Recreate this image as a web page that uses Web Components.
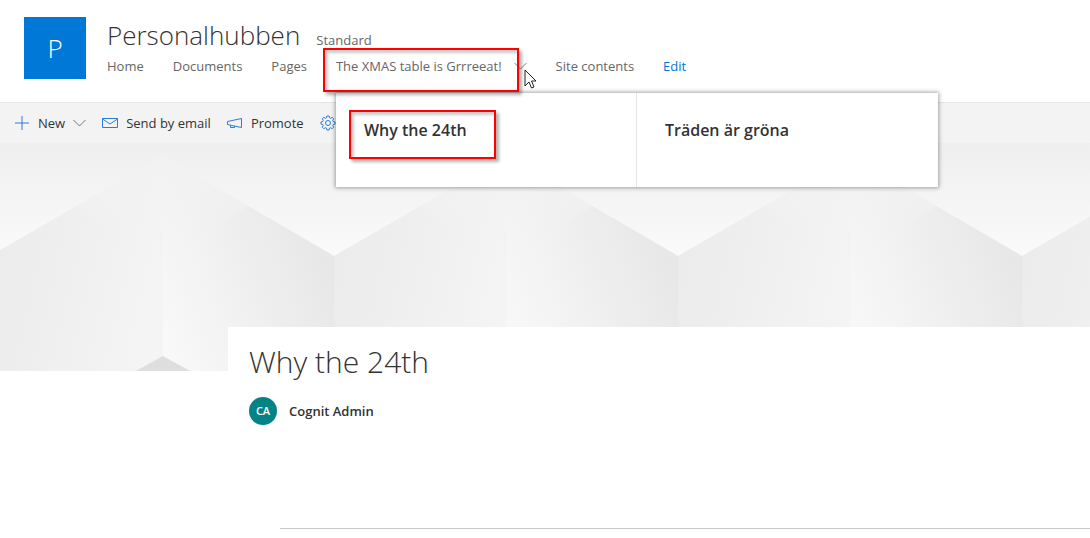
<!DOCTYPE html>
<html lang="sv">
<head>
<meta charset="utf-8">
<meta name="viewport" content="width=device-width, initial-scale=1">
<title>Personalhubben</title>
<style>
    body {
        margin: 0;
        background: #fff;
        color: #333;
        font-family: 'Open Sans', 'Noto Sans', sans-serif;
        font-size: 13px;
        line-height: 20px;
    }
</style>
</head>
<body>
<site-header name="Personalhubben" tier="Standard" initial="P">
    <nav-item href="#home">Home</nav-item>
    <nav-item href="#documents">Documents</nav-item>
    <nav-item href="#pages">Pages</nav-item>
    <nav-item href="#xmas" open>The XMAS table is Grrreeat!
        <mega-menu slot="menu">
            <menu-column href="#why" marked>Why the 24th</menu-column>
            <menu-column href="#trees">Träden är gröna</menu-column>
        </mega-menu>
    </nav-item>
    <nav-item href="#contents">Site contents</nav-item>
    <nav-item href="#edit" accent>Edit</nav-item>
</site-header>
<command-bar>
    <command-button icon="plus" chevron>New</command-button>
    <command-button icon="mail">Send by email</command-button>
    <command-button icon="promote">Promote</command-button>
    <command-button icon="gear"></command-button>
</command-bar>
<main>
    <hero-banner></hero-banner>
    <page-title author="Cognit Admin" initials="CA">Why the 24th</page-title>
</main>

<script>
const icons = {
    plus: '<svg width="16" height="16" viewBox="0 0 16 16"><path d="M8 1v14M1 8h14"/></svg>',
    mail: '<svg width="16" height="16" viewBox="0 0 16 16"><path d="M.5 3.500h15v9H.5zM.5 4l7.500 5 7.500-5"/></svg>',
    promote: '<svg width="16" height="16" viewBox="0 0 16 16"><path d="M.5 6.500v3l14 3v-9zM3.500 10.500v2h4v-1.500"/></svg>',
    gear: '<svg width="16" height="16" viewBox="0 0 16 16"><circle cx="8" cy="8" r="2.500"/><path d="M6.900 1h2.200l.4 1.800 1.100.5 1.600-1 1.500 1.500-1 1.600.5 1.100 1.800.4v2.200l-1.800.4-.5 1.100 1 1.600-1.500 1.500-1.600-1-1.100.5-.4 1.800H6.900l-.4-1.800-1.100-.5-1.600 1-1.500-1.500 1-1.600-.5-1.100L1 9.100V6.900l1.800-.4.5-1.100-1-1.600 1.500-1.500 1.600 1 1.100-.5z"/></svg>'
}
const chevron = '<svg class="chevron" width="13" height="8" viewBox="0 0 13 8" aria-hidden="true"><path d="M.5 1l6 6 6-6"/></svg>'

class SiteHeader extends HTMLElement {
    constructor() {
        super()
        this.attachShadow({mode:'open'})
        this.shadowRoot.innerHTML = `
            <style>
            :host { display: block; border-bottom: 1px solid #e5e5e5; }
            header { display: flex; gap: 21px; padding: 17px 24px 23px; }
            .logo {
                flex: none;
                display: grid;
                place-items: center;
                width: 62px;
                height: 62px;
                background: #0078d7;
                color: #fff;
                font-size: 26px;
                font-weight: 300;
                line-height: 36px;
                text-decoration: none;
            }
            .top { display: flex; align-items: baseline; gap: 16px; }
            h1 { margin: 0; font-size: 26px; font-weight: 300; line-height: 36px; }
            .tier { color: #666; }
            nav { display: flex; gap: 29px; margin-top: 3px; }
            </style>
            <header>
                <a class="logo" href="#home"></a>
                <div>
                    <div class="top"><h1></h1><span class="tier"></span></div>
                    <nav><slot></slot></nav>
                </div>
            </header>`
        this.shadowRoot.querySelector('.logo').textContent = this.getAttribute('initial')
        this.shadowRoot.querySelector('h1').textContent = this.getAttribute('name')
        this.shadowRoot.querySelector('.tier').textContent = this.getAttribute('tier')
    }
}

class NavItem extends HTMLElement {
    constructor() {
        super()
        this.attachShadow({mode:'open'})
        this.shadowRoot.innerHTML = `
            <style>
            :host { display: block; position: relative; white-space: nowrap; }
            a { display: flex; align-items: center; gap: 12px; color: #666; text-decoration: none; }
            :host([accent]) a { color: #0078d7; }
            .chevron { fill: none; stroke: #888; }
            .frame {
                position: absolute;
                inset: -8px 8px -16px -13px;
                border: 2px solid #f00;
                box-shadow: 3px 3px 3px rgba(0,0,0,.3), inset 3px 3px 3px rgba(0,0,0,.2);
                pointer-events: none;
                z-index: 3;
            }
            .pointer { position: absolute; right: -10px; top: 13px; z-index: 4; }
            ::slotted(mega-menu) { position: absolute; left: 0; top: 37px; z-index: 2; }
            </style>
            <a><span><slot></slot></span></a>`
        const link = this.shadowRoot.querySelector('a')
        link.href = this.getAttribute('href')
        if (this.hasAttribute('open')) {
            link.insertAdjacentHTML('beforeend', chevron)
            link.insertAdjacentHTML('afterend', `
                <slot name="menu"></slot>
                <div class="frame"></div>
                <svg class="pointer" width="13" height="21" viewBox="0 0 13 21" aria-hidden="true">
                    <path d="M1 1v16l4-4 2.500 6 2.500-1-2.500-6H12z" fill="#fff" stroke="#222"/>
                </svg>`)
        }
    }
}

class MegaMenu extends HTMLElement {
    constructor() {
        super()
        this.attachShadow({mode:'open'})
        this.shadowRoot.innerHTML = `
            <style>
            :host {
                display: grid;
                grid-template-columns: 1fr 1fr;
                width: 602px;
                background: #fff;
                box-shadow: 0 0 4px 1px rgba(0,0,0,.35);
            }
            ::slotted(:not(:last-child)) { border-right: 1px solid #e5e5e5; }
            </style>
            <slot></slot>`
    }
}

class MenuColumn extends HTMLElement {
    constructor() {
        super()
        this.attachShadow({mode:'open'})
        this.shadowRoot.innerHTML = `
            <style>
            :host { display: block; padding: 25px 28px 45px; }
            a {
                position: relative;
                display: inline-block;
                color: #333;
                font-size: 16px;
                font-weight: 600;
                line-height: 24px;
                text-decoration: none;
            }
            :host([marked]) a::after {
                content: '';
                position: absolute;
                inset: -8px -29px -17px -15px;
                border: 2px solid #f00;
                box-shadow: 3px 3px 3px rgba(0,0,0,.3), inset 3px 3px 3px rgba(0,0,0,.2);
            }
            </style>
            <a><slot></slot></a>`
        this.shadowRoot.querySelector('a').href = this.getAttribute('href')
    }
}

class CommandBar extends HTMLElement {
    constructor() {
        super()
        this.attachShadow({mode:'open'})
        this.shadowRoot.innerHTML = `
            <style>
            :host { display: flex; gap: 16px; padding: 0 14px; background: #f3f3f3; overflow: hidden; }
            </style>
            <slot></slot>`
    }
}

class CommandButton extends HTMLElement {
    constructor() {
        super()
        this.attachShadow({mode:'open'})
        this.shadowRoot.innerHTML = `
            <style>
            :host { display: block; flex: none; }
            button {
                display: flex;
                align-items: center;
                gap: 8px;
                height: 40px;
                padding: 0;
                border: 0;
                background: none;
                color: #333;
                font: inherit;
                cursor: pointer;
            }
            svg { fill: none; stroke: #2b7cd3; }
            .chevron { stroke: #777; }
            </style>
            <button type="button">${icons[this.getAttribute('icon')]}<slot></slot>${this.hasAttribute('chevron') ? chevron : ''}</button>`
    }
}

class HeroBanner extends HTMLElement {
    constructor() {
        super()
        this.attachShadow({mode:'open'})
        this.shadowRoot.innerHTML = `
            <style>
            :host { display: block; }
            svg { display: block; width: 100%; height: 228px; }
            </style>
            <svg aria-hidden="true">
                <defs>
                    <linearGradient id="sky" x1="0" y1="0" x2="0" y2="1">
                        <stop offset="0" stop-color="#efefef"/>
                        <stop offset="1" stop-color="#fafafa"/>
                    </linearGradient>
                    <linearGradient id="left" x1="0" y1=".3" x2="1" y2=".6">
                        <stop offset="0" stop-color="#ebebeb"/>
                        <stop offset="1" stop-color="#f4f4f4"/>
                    </linearGradient>
                    <linearGradient id="right" x1="0" y1=".9" x2="1" y2=".4">
                        <stop offset="0" stop-color="#f9f9f9"/>
                        <stop offset="1" stop-color="#e6e6e6"/>
                    </linearGradient>
                    <linearGradient id="fade" x1="0" y1="0" x2="0" y2="1">
                        <stop offset="0" stop-color="#f2f2f2"/>
                        <stop offset="1" stop-color="#f2f2f2" stop-opacity="0"/>
                    </linearGradient>
                    <pattern id="cubes" x="-10" width="344" height="228" patternUnits="userSpaceOnUse">
                        <rect width="344" height="114" fill="url(#sky)"/>
                        <path d="M0 113L173 13V228H0z" fill="url(#left)"/>
                        <path d="M173 13L344 113V228H173z" fill="url(#right)"/>
                        <path d="M87 63L173 13 259 63 173 113z" fill="url(#fade)"/>
                        <path d="M146 228L173 213 200 228z" fill="#dedede"/>
                    </pattern>
                </defs>
                <rect width="100%" height="228" fill="url(#cubes)"/>
            </svg>`
    }
}

class PageTitle extends HTMLElement {
    constructor() {
        super()
        this.attachShadow({mode:'open'})
        this.shadowRoot.innerHTML = `
            <style>
            :host {
                display: block;
                position: relative;
                margin: -44px 0 0 228px;
                padding: 14px 0 0 21px;
                background: #fff;
            }
            h2 { margin: 0; font-size: 30px; font-weight: 300; line-height: 42px; }
            .author { display: flex; align-items: center; gap: 12px; margin-top: 14px; font-weight: 600; }
            .avatar {
                display: grid;
                place-items: center;
                width: 28px;
                height: 28px;
                border-radius: 50%;
                background: #038387;
                color: #fff;
                font-size: 11px;
            }
            hr { margin: 103px 0 0 31px; border: 0; border-top: 1px solid #c8c8c8; }
            </style>
            <h2><slot></slot></h2>
            <div class="author"><span class="avatar"></span><span class="name"></span></div>
            <hr>`
        this.shadowRoot.querySelector('.avatar').textContent = this.getAttribute('initials')
        this.shadowRoot.querySelector('.name').textContent = this.getAttribute('author')
    }
}

window.customElements.define('site-header', SiteHeader)
window.customElements.define('nav-item', NavItem)
window.customElements.define('mega-menu', MegaMenu)
window.customElements.define('menu-column', MenuColumn)
window.customElements.define('command-bar', CommandBar)
window.customElements.define('command-button', CommandButton)
window.customElements.define('hero-banner', HeroBanner)
window.customElements.define('page-title', PageTitle)
</script>
</body>
</html>
